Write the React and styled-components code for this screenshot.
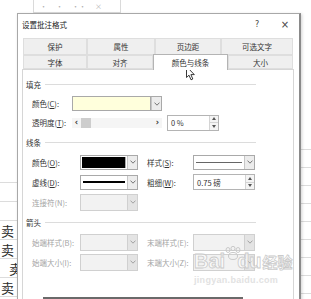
import React from 'react'
import styled, { createGlobalStyle } from 'styled-components'

const GlobalStyle = createGlobalStyle`
  html, body {
    margin: 0;
    padding: 0;
    background: #fff;
  }
  body {
    font-family: "Noto Sans CJK SC", "Liberation Sans", sans-serif;
  }
`

const topTabs = [
	{ label: '保护', w: 64 },
	{ label: '属性', w: 68 },
	{ label: '页边距', w: 66 },
	{ label: '可选文字', w: 72 }
]
const bottomTabs = [
	{ label: '字体', w: 64 },
	{ label: '对齐', w: 66 },
	{ label: '颜色与线条', w: 75, active: true },
	{ label: '大小', w: 65 }
]

const leftCells = ['', '', '', '卖', '卖', '卖', '卖']
const rightCells = Array.from({ length: 10 })

const Chevron = ({ color = '#666' }) => (
	<svg width="6" height="4" viewBox="0 0 6 4">
		<polyline points="0.5,0.6 3,3.2 5.5,0.6" fill="none" stroke={color} strokeWidth="0.9" />
	</svg>
)

const Spinner = () => (
	<SpinBox>
		<SpinHalf>
			<svg width="4" height="3" viewBox="0 0 4 3"><polygon points="0,3 2,0 4,3" fill="#555" /></svg>
		</SpinHalf>
		<SpinHalf $bottom>
			<svg width="4" height="3" viewBox="0 0 4 3"><polygon points="0,0 4,0 2,3" fill="#555" /></svg>
		</SpinHalf>
	</SpinBox>
)

const Combo = ({ w, disabled, children }) => (
	<ComboBox $w={w} $disabled={disabled}>
		<Field>{children}</Field>
		<DropButton $disabled={disabled}>
			<Chevron color={disabled ? '#9a9a9a' : '#666'} />
		</DropButton>
	</ComboBox>
)

const App = () => (
	<Screen>
		<GlobalStyle />
		<Sheet>
			<TopStrip>
				<Toolbox>
					<span>·</span><span>·</span><span>··</span><span>×</span>
				</Toolbox>
			</TopStrip>
			<SheetBody>
				<SidePane $w={17} $top={151}>
					{ leftCells.map((c, i) => (
						<Cell key={i} $h={19} $shift={i === 5}>{ c }</Cell>
					))}
				</SidePane>
				<SidePane $w={11} $top={119}>
					{ rightCells.map((c, i) => (
						<Cell key={i} $h={18} />
					))}
				</SidePane>
			</SheetBody>
		</Sheet>

		<Dialog>
			<TitleBar>
				<Title>设置批注格式</Title>
				<TitleButton>?</TitleButton>
				<TitleButton $close>×</TitleButton>
			</TitleBar>

			<Tabs>
				<TabRow $h={17}>
					{ topTabs.map(t => (
						<Tab key={t.label} $w={t.w}>{ t.label }</Tab>
					))}
				</TabRow>
				<TabRow $h={14}>
					{ bottomTabs.map(t => (
						<Tab key={t.label} $w={t.w} $active={t.active}>{ t.label }</Tab>
					))}
				</TabRow>
			</Tabs>

			<Panel>
				<Content>
					<SectionHead>
						<span>填充</span>
						<Rule />
					</SectionHead>
					<Row $h={19}>
						<Label $w={40}>颜色(<u>C</u>):</Label>
						<Combo w={90}>
							<Swatch $color="#ffffdc" />
						</Combo>
					</Row>
					<Row $h={19}>
						<Label $w={40}>透明度(<u>T</u>):</Label>
						<Slider>
							<Arrow>‹</Arrow>
							<Thumb />
							<Arrow $right>›</Arrow>
						</Slider>
						<SpinInput $w={52} $ml={5}>
							<InputText>0 %</InputText>
							<Spinner />
						</SpinInput>
					</Row>

					<SectionHead>
						<span>线条</span>
						<Rule />
					</SectionHead>
					<Row $h={20}>
						<Label $w={48}>颜色(<u>O</u>):</Label>
						<Combo w={58}>
							<Swatch $color="#000" $pad />
						</Combo>
						<Label $w={46} $ml={9}>样式(<u>S</u>):</Label>
						<Combo w={62}>
							<LineSample $weight={1} $color="#666" />
						</Combo>
					</Row>
					<Row $h={20}>
						<Label $w={48}>虚线(<u>D</u>):</Label>
						<Combo w={58}>
							<LineSample $weight={2} $color="#000" />
						</Combo>
						<Label $w={46} $ml={9}>粗细(<u>W</u>):</Label>
						<SpinInput $w={62}>
							<InputText>0.75 磅</InputText>
							<Spinner />
						</SpinInput>
					</Row>
					<Row $h={20}>
						<Label $w={48} $disabled>连接符(N):</Label>
						<Combo w={58} disabled />
					</Row>

					<SectionHead>
						<span>箭头</span>
						<Rule />
					</SectionHead>
					<Row $h={20}>
						<Label $w={48} $disabled>始端样式(B):</Label>
						<Combo w={58} disabled />
						<Label $w={46} $ml={9} $disabled>末端样式(E):</Label>
						<Combo w={62} disabled />
					</Row>
					<Row $h={20}>
						<Label $w={48} $disabled>始端大小(I):</Label>
						<Combo w={58} disabled />
						<Label $w={46} $ml={9} $disabled>末端大小(Z):</Label>
						<Combo w={62} disabled />
					</Row>

					<FootBar />
				</Content>
			</Panel>
		</Dialog>

		<Watermark>
			<MarkLogo>
				<span>Bai</span>
				<svg width="20" height="14" viewBox="0 0 20 14">
					<g fill="none" stroke="#c9c9c9" strokeWidth="1">
						<ellipse cx="5" cy="4" rx="2" ry="2.5" />
						<ellipse cx="10" cy="2.5" rx="2" ry="2.2" />
						<ellipse cx="15" cy="4" rx="2" ry="2.5" />
						<ellipse cx="10" cy="10" rx="4.5" ry="3.5" />
					</g>
				</svg>
				<span>du</span>
				<MarkCn>经验</MarkCn>
			</MarkLogo>
			<MarkUrl>jingyan.baidu.com</MarkUrl>
		</Watermark>

		<Cursor width="10" height="15" viewBox="0 0 10 15">
			<path d="M0.5 0.5 L0.5 11.5 L3 9.2 L5 13.8 L6.8 13 L4.9 8.6 L8.3 8.6 Z" fill="#fff" stroke="#222" strokeWidth="0.9" strokeLinejoin="round" />
		</Cursor>
	</Screen>
)

const Screen = styled.div`
	position: relative;
	width: 311px;
	height: 299px;
	overflow: hidden;
	background: #fff;
	font-family: "Noto Sans CJK SC", "Liberation Sans", sans-serif;
`
const Sheet = styled.div`
	display: flex;
	flex-direction: column;
	height: 100%;
`
const TopStrip = styled.div`
	height: 13px;
	flex-shrink: 0;
	display: flex;
`
const Toolbox = styled.div`
	margin-left: 33px;
	width: 88px;
	box-sizing: border-box;
	border: 1px solid #dadada;
	border-top: 0;
	display: flex;
	align-items: center;
	gap: 9px;
	padding-left: 6px;
	font-size: 7px;
	color: #b0b0b0;
`
const SheetBody = styled.div`
	flex: 1;
	display: flex;
	justify-content: space-between;
`
const SidePane = styled.div`
	width: ${p => p.$w}px;
	display: flex;
	flex-direction: column;
	padding-top: ${p => p.$top}px;
	box-sizing: border-box;
`
const Cell = styled.div`
	height: ${p => p.$h}px;
	flex-shrink: 0;
	box-sizing: border-box;
	border-bottom: 1px solid #dcdcdc;
	display: flex;
	align-items: center;
	padding-left: ${p => (p.$shift ? 9 : 1)}px;
	font-size: 13px;
	color: #2a2a2a;
	white-space: nowrap;
`
const Dialog = styled.div`
	position: absolute;
	left: 17px;
	top: 13px;
	width: 284px;
	height: 300px;
	box-sizing: border-box;
	background: #fff;
	border: 1px solid #a8a8a8;
	border-right: 2px solid #8a8a8a;
	box-shadow: 1px 1px 3px rgba(0, 0, 0, 0.18);
	display: flex;
	flex-direction: column;
`
const TitleBar = styled.div`
	height: 21px;
	flex-shrink: 0;
	display: flex;
	align-items: center;
	padding-left: 4px;
`
const Title = styled.div`
	flex: 1;
	font-size: 7.5px;
	color: #222;
`
const TitleButton = styled.div`
	width: 28px;
	text-align: center;
	font-family: "DejaVu Sans", sans-serif;
	font-size: ${p => (p.$close ? 10 : 8)}px;
	color: #444;
`
const Tabs = styled.div`
	padding: 3px 5px 0 5px;
	display: flex;
	flex-direction: column;
`
const TabRow = styled.div`
	height: ${p => p.$h}px;
	display: flex;
`
const Tab = styled.div`
	width: ${p => p.$w}px;
	box-sizing: border-box;
	display: flex;
	align-items: center;
	justify-content: center;
	font-size: 7.5px;
	color: #333;
	background: ${p => (p.$active ? '#fff' : '#efefef')};
	border: 1px solid ${p => (p.$active ? '#b4b4b4' : '#dedede')};
	border-bottom: ${p => (p.$active ? '0' : '1px solid #dedede')};
	margin: ${p => (p.$active ? '-1px 0 -1px' : '0')};
	height: ${p => (p.$active ? 'calc(100% + 2px)' : '100%')};
	position: ${p => (p.$active ? 'relative' : 'static')};
	z-index: ${p => (p.$active ? 1 : 'auto')};
`
const Panel = styled.div`
	flex: 1;
	margin: 0 5px 0 4px;
	border: 1px solid #d6d6d6;
	box-sizing: border-box;
`
const Content = styled.div`
	width: 230px;
	padding: 4px 0 0 3px;
	display: flex;
	flex-direction: column;
`
const SectionHead = styled.div`
	height: 20px;
	display: flex;
	align-items: center;
	gap: 4px;
	font-size: 7.5px;
	color: #333;
`
const Rule = styled.div`
	flex: 1;
	height: 1px;
	background: #dcdcdc;
`
const Row = styled.div`
	height: ${p => p.$h}px;
	display: flex;
	align-items: center;
	padding-left: 6px;
`
const Label = styled.div`
	width: ${p => p.$w}px;
	margin-left: ${p => p.$ml || 0}px;
	flex-shrink: 0;
	font-size: 7.5px;
	white-space: nowrap;
	color: ${p => (p.$disabled ? '#a4a4a4' : '#333')};

	u {
		text-decoration-thickness: 0.5px;
		text-underline-offset: 1px;
	}
`
const ComboBox = styled.div`
	width: ${p => p.$w}px;
	height: ${p => (p.$disabled ? 17 : 15)}px;
	box-sizing: border-box;
	display: flex;
	border: 1px solid ${p => (p.$disabled ? '#d0d0d0' : '#a9a9a9')};
	background: ${p => (p.$disabled ? '#f2f2f2' : '#fff')};
`
const Field = styled.div`
	flex: 1;
	display: flex;
	align-items: center;
	min-width: 0;
`
const DropButton = styled.div`
	width: 9px;
	flex-shrink: 0;
	display: flex;
	align-items: center;
	justify-content: center;
	border-left: 1px solid ${p => (p.$disabled ? '#d0d0d0' : '#c6c6c6')};
	background: ${p => (p.$disabled ? '#e4e4e4' : '#ececec')};
`
const Swatch = styled.div`
	align-self: stretch;
	flex: 1;
	margin: ${p => (p.$pad ? '1px' : '0')};
	background: ${p => p.$color};
	border-right: 1px solid #a9a9a9;
`
const LineSample = styled.div`
	flex: 1;
	margin: 0 2px;
	height: ${p => p.$weight}px;
	background: ${p => p.$color};
`
const Slider = styled.div`
	width: 90px;
	height: 10px;
	display: flex;
	align-items: center;
	background: #f5f5f5;
`
const Arrow = styled.span`
	width: 9px;
	text-align: center;
	font-family: "DejaVu Sans", sans-serif;
	font-size: 8px;
	font-weight: bold;
	line-height: 10px;
	color: #333;
	margin-left: ${p => (p.$right ? 'auto' : '0')};
`
const Thumb = styled.div`
	width: 10px;
	height: 10px;
	background: #cdcdcd;
`
const SpinInput = styled.div`
	width: ${p => p.$w}px;
	height: 16px;
	margin-left: ${p => p.$ml || 0}px;
	box-sizing: border-box;
	display: flex;
	border: 1px solid #b4b4b4;
	background: #fff;
`
const InputText = styled.div`
	flex: 1;
	display: flex;
	align-items: center;
	padding-left: 3px;
	font-size: 7.5px;
	color: #333;
`
const SpinBox = styled.div`
	width: 8px;
	display: flex;
	flex-direction: column;
	border-left: 1px solid #d4d4d4;
	background: #f4f4f4;
`
const SpinHalf = styled.div`
	flex: 1;
	display: flex;
	align-items: center;
	justify-content: center;
	border-top: ${p => (p.$bottom ? '1px solid #d4d4d4' : '0')};
`
const FootBar = styled.div`
	margin: 25px 0 0 17px;
	width: 200px;
	height: 2px;
	background: #6a6a6a;
`
const Watermark = styled.div`
	position: absolute;
	left: 194px;
	top: 246px;
	display: flex;
	flex-direction: column;
	align-items: flex-start;
	pointer-events: none;
`
const MarkLogo = styled.div`
	display: flex;
	align-items: flex-end;
	font-family: "Liberation Sans", sans-serif;
	font-size: 20px;
	font-weight: bold;
	line-height: 22px;
	color: rgba(255, 255, 255, 0.6);
	-webkit-text-stroke: 0.8px #cacaca;

	svg {
		margin: 0 -6px 12px -2px;
	}
`
const MarkCn = styled.span`
	font-family: "Noto Sans CJK SC", sans-serif;
	font-size: 15px;
	line-height: 20px;
	margin-left: 1px;
`
const MarkUrl = styled.div`
	margin-top: 3px;
	font-family: "Liberation Sans", sans-serif;
	font-size: 9px;
	font-weight: bold;
	letter-spacing: 0.3px;
	color: #e2e2e2;
`
const Cursor = styled.svg`
	position: absolute;
	left: 186px;
	top: 66px;
`

export default App
